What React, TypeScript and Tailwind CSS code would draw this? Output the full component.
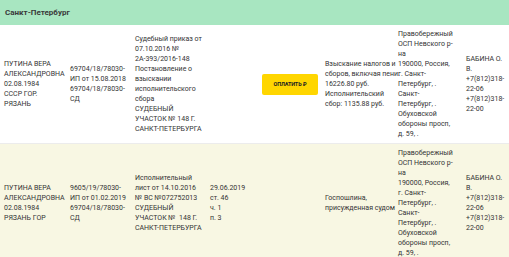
import React from 'react';

interface Row {
  name: string[];
  ip: string[];
  doc: string[];
  article: string[];
  pay: boolean;
  subject: string[];
  osp: string[];
  bailiff: string[];
  bg: string;
}

const OSP = [
  'Правобережный',
  'ОСП Невского р-',
  'на',
  '190000, Россия,',
  'г. Санкт-',
  'Петербург, .',
  'Санкт-',
  'Петербург, .',
  'Обуховской',
  'обороны просп,',
  'д. 59, .',
];

const BAILIFF = ['БАБИНА О.', 'В.', '+7(812)318-', '22-06', '+7(812)318-', '22-00'];

const ROWS: Row[] = [
  {
    name: ['ПУТИНА ВЕРА', 'АЛЕКСАНДРОВНА', '02.08.1984', 'СССР ГОР.', 'РЯЗАНЬ'],
    ip: ['69704/18/78030-', 'ИП от 15.08.2018', '69704/18/78030-', 'СД'],
    doc: [
      'Судебный приказ от',
      '07.10.2016 №',
      '2А-393/2016-148',
      'Постановление о',
      'взыскании',
      'исполнительского',
      'сбора',
      'СУДЕБНЫЙ',
      'УЧАСТОК № 148 Г.',
      'САНКТ-ПЕТЕРБУРГА',
    ],
    article: [],
    pay: true,
    subject: [
      'Взыскание налогов и',
      'сборов, включая пени:',
      '16226.80 руб.',
      'Исполнительский',
      'сбор: 1135.88 руб.',
    ],
    osp: OSP,
    bailiff: BAILIFF,
    bg: 'bg-white',
  },
  {
    name: ['ПУТИНА ВЕРА', 'АЛЕКСАНДРОВНА', '02.08.1984', 'РЯЗАНЬ ГОР'],
    ip: ['9605/19/78030-', 'ИП от 01.02.2019', '69704/18/78030-', 'СД'],
    doc: [
      'Исполнительный',
      'лист от 14.10.2016',
      '№ ВС №072752013',
      'СУДЕБНЫЙ',
      'УЧАСТОК №  148 Г.',
      'САНКТ-ПЕТЕРБУРГА',
    ],
    article: ['29.06.2019', 'ст. 46', 'ч. 1', 'п. 3'],
    pay: false,
    subject: ['Госпошлина,', 'присужденная судом'],
    osp: OSP,
    bailiff: BAILIFF,
    bg: 'bg-[#f8f7e3]',
  },
];

function Lines({ lines }: { lines: string[] }) {
  return (
    <div className="whitespace-pre">
      {lines.map((l, i) => (
        <div key={i}>{l}</div>
      ))}
    </div>
  );
}

export default function App() {
  return (
    <div
      className="w-[509px] h-[257px] overflow-hidden bg-white text-[#333] text-[7px] leading-[10px]"
      style={{ fontFamily: 'Roboto, "Liberation Sans", sans-serif' }}
    >
      {/* Region header */}
      <div className="h-[25px] bg-[#a8e6c1] flex items-center px-[5px]">
        <span className="text-[8px] font-bold text-[#3a3a3a]">Санкт-Петербург</span>
      </div>

      {ROWS.map((row, idx) => (
        <div
          key={idx}
          className={`grid grid-cols-[66px_65px_75px_52px_63px_73px_68px_1fr] items-center py-[4px] border-b border-[#ececec] ${row.bg}`}
        >
          <div className="pl-[4px]"><Lines lines={row.name} /></div>
          <div className="pl-[4px]"><Lines lines={row.ip} /></div>
          <div className="pl-[4px]"><Lines lines={row.doc} /></div>
          <div className="pl-[4px]"><Lines lines={row.article} /></div>
          <div className="pl-[4px]">
            {row.pay && (
              <button className="w-[56px] h-[21px] rounded-[2px] bg-[#ffd600] text-[5.5px] font-bold text-[#222] tracking-tight">
                ОПЛАТИТЬ ₽
              </button>
            )}
          </div>
          <div className="pl-[4px]"><Lines lines={row.subject} /></div>
          <div className="pl-[4px]"><Lines lines={row.osp} /></div>
          <div className="pl-[4px]"><Lines lines={row.bailiff} /></div>
        </div>
      ))}
    </div>
  );
}
